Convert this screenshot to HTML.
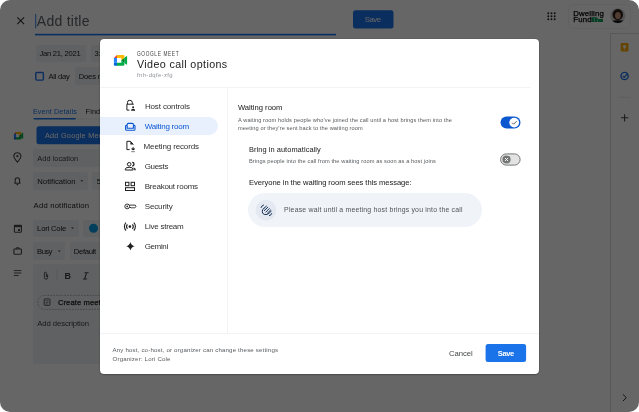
<!DOCTYPE html>
<html><head><meta charset="utf-8">
<style>
*{box-sizing:border-box;margin:0;padding:0}
html,body{width:639px;height:412px;background:#fff;overflow:hidden}
body{font-family:"Liberation Sans",sans-serif;position:relative}
.a{position:absolute}
.t{position:absolute;white-space:nowrap;line-height:1}
#page{position:absolute;left:0;top:0;width:639px;height:412px;border-radius:10px;overflow:hidden;background:#fff;will-change:transform}
#scrim{position:absolute;left:0;top:0;width:639px;height:412px;background:rgba(0,0,0,0.6)}
.chip{position:absolute;background:#f1f3f4;border-radius:2px}
#dlg{position:absolute;left:100px;top:39px;width:439px;height:335px;background:#fff;border-radius:4px;box-shadow:0 0 1px rgba(0,0,0,0.6),0 1px 2px rgba(0,0,0,0.25)}

.s1{-webkit-text-stroke:0.25px currentColor}
.s2{-webkit-text-stroke:0.03px currentColor}

</style></head><body>
<div id="page">
  <!-- ===== background page ===== -->
  <svg class="a" style="left:0;top:0" width="639" height="412" viewBox="0 0 639 412">
    <!-- close X -->
    <path d="M17.3 17.3L24.1 24.1M24.1 17.3L17.3 24.1" stroke="#303134" stroke-width="1.1" fill="none"/>
    <!-- title underline + cursor -->
    <rect x="35" y="33.8" width="301" height="1.6" fill="#1a73e8"/>
    <rect x="35.3" y="14" width="0.9" height="14.3" fill="#1a73e8"/>
    <!-- top save -->
    <rect x="353" y="10.2" width="40.5" height="18.3" rx="2.5" fill="#1a73e8"/>
    <!-- apps grid -->
    <g fill="#1f1f1f">
      <circle cx="548.3" cy="13.3" r="0.95"/><circle cx="551.5" cy="13.3" r="0.95"/><circle cx="554.7" cy="13.3" r="0.95"/>
      <circle cx="548.3" cy="16.3" r="0.95"/><circle cx="551.5" cy="16.3" r="0.95"/><circle cx="554.7" cy="16.3" r="0.95"/>
      <circle cx="548.3" cy="19.3" r="0.95"/><circle cx="551.5" cy="19.3" r="0.95"/><circle cx="554.7" cy="19.3" r="0.95"/>
    </g>
    <!-- logo box -->
    <rect x="568.5" y="4.5" width="62" height="24" rx="4.5" fill="none" stroke="#f1f3f4" stroke-width="1"/>
    <path d="M591.5 17.2H596.5L598.5 19H603V21.9H591.5Z" fill="#0f9d58"/>
    <path d="M594.5 17.8V21.9M597.5 19.6V21.9" stroke="#fff" stroke-width="0.5"/>
    <!-- avatar -->
    <defs><clipPath id="avc"><circle cx="617.8" cy="15.8" r="7.3"/></clipPath></defs>
    <circle cx="617.8" cy="15.8" r="7.8" fill="#e8e8e8"/>
    <g clip-path="url(#avc)">
      <rect x="610" y="8" width="16" height="16" fill="#cfcfcf"/>
      <ellipse cx="617.8" cy="14.6" rx="5.2" ry="5.6" fill="#2a1c16"/>
      <ellipse cx="617.9" cy="15.6" rx="2.9" ry="3.7" fill="#c8967c"/>
      <path d="M610 21.3Q617.8 19.4 626 21.3V24H610Z" fill="#0a0a0a"/>
    </g>
    <!-- sidebar -->
    <path d="M610.5 412V33.5H639" stroke="#dadce0" stroke-width="1" fill="none"/>
    <rect x="620.7" y="43" width="7.8" height="8.4" rx="1" fill="#f9ab00"/>
    <circle cx="624.5" cy="46.5" r="1.6" fill="#fff"/><rect x="623.8" y="48.3" width="1.4" height="1.3" fill="#fff"/>
    <circle cx="624.6" cy="76" r="3.6" fill="none" stroke="#1a73e8" stroke-width="1.4"/>
    <path d="M622.8 75.8L624.3 77.3L627.6 73.4" stroke="#1a73e8" stroke-width="1.2" fill="none"/>
    <rect x="619" y="96.7" width="11.7" height="1" fill="#e8eaed"/>
    <path d="M624.6 114.2V121.4M621 117.8H628.3" stroke="#444746" stroke-width="1.1"/>
    <path d="M622.9 394.3L626.3 397.7L622.9 401.1" stroke="#303134" stroke-width="1" fill="none"/>
  </svg>

  <!-- chips -->
  <div class="chip" style="left:35.5px;top:44.9px;width:50.3px;height:17.4px"></div>
  <div class="chip" style="left:90.7px;top:44.9px;width:45px;height:17.4px"></div>
  <div class="chip" style="left:75.1px;top:67.3px;width:60px;height:17.5px"></div>
  <div class="chip" style="left:33.1px;top:149.2px;width:100px;height:17.5px"></div>
  <div class="chip" style="left:33.1px;top:172.2px;width:54.7px;height:17.8px"></div>
  <div class="chip" style="left:92.1px;top:172.2px;width:40px;height:17.8px"></div>
  <div class="chip" style="left:33.3px;top:219.6px;width:45.5px;height:17.5px"></div>
  <div class="chip" style="left:82.9px;top:219.6px;width:40px;height:17.5px"></div>
  <div class="chip" style="left:33.3px;top:242.3px;width:31.6px;height:17.5px"></div>
  <div class="chip" style="left:70px;top:242.3px;width:50px;height:17.5px"></div>
  <div class="chip" style="left:33.2px;top:263.5px;width:100px;height:100.4px"></div>

  <svg class="a" style="left:0;top:0" width="639" height="412" viewBox="0 0 639 412">
    <!-- checkbox -->
    <rect x="35.8" y="72.5" width="7.6" height="7.6" rx="1" fill="none" stroke="#1a73e8" stroke-width="1.4"/>
    <!-- tabs -->
    <rect x="76" y="118.6" width="60" height="0.8" fill="#e8eaed"/>
    <rect x="33.5" y="118" width="42.4" height="1.6" rx="0.8" fill="#1a73e8"/>
    <!-- add meet button -->
    <rect x="36.5" y="126.2" width="100" height="18.1" rx="2.5" fill="#1a73e8"/>
    <!-- small meet logo -->
    <g transform="translate(13.9 131.9) scale(0.1063)">
      <path fill="#00832d" d="M49.5 36l8.53 9.75 11.47 7.33 2-17.02-2-16.46-11.69 6.44z"/><path fill="#0066da" d="M0 51.5V66c0 3.315 2.685 6 6 6h14.5l3-10.96-3-9.54-9.95-3z"/><path fill="#e94235" d="M20.5 0L0 20.5l10.55 3 9.95-3 2.95-9.41z"/><path fill="#2684fc" d="M20.5 20.5H0v31h20.5z"/><path fill="#00ac47" d="M82.6 8.68L69.5 19.42v33.66l13.16 10.79c1.97 1.54 4.85.135 4.85-2.37V11c0-2.535-2.945-3.925-4.91-2.32zM49.5 36v15.5h-29V72h43c3.315 0 6-2.685 6-6V53.08z"/><path fill="#ffba00" d="M63.5 0h-43v20.5h29V36l20-16.57V6c0-3.315-2.685-6-6-6z"/>
    </g>
    <!-- location pin -->
    <path d="M17.4 162.2C15.2 159.6 13.9 157.7 13.9 156.2A3.5 3.5 0 0 1 20.9 156.2C20.9 157.7 19.6 159.6 17.4 162.2Z" fill="none" stroke="#444746" stroke-width="1.1"/>
    <circle cx="17.4" cy="156.2" r="1.1" fill="#444746"/>
    <!-- bell -->
    <path d="M14.3 183.2H20.5M15.2 183.2V180A2.2 2.2 0 0 1 19.6 180V183.2M16.6 184.6H18.2" stroke="#444746" stroke-width="1.1" fill="none"/>
    <!-- calendar -->
    <rect x="14.4" y="225.4" width="7" height="6.8" rx="0.6" fill="none" stroke="#444746" stroke-width="1.1"/>
    <rect x="14.4" y="225.4" width="7" height="1.8" fill="#444746"/>
    <rect x="18" y="229" width="2" height="2" fill="#444746"/>
    <!-- briefcase -->
    <rect x="13.9" y="249" width="7.5" height="5.2" rx="0.6" fill="none" stroke="#444746" stroke-width="1.1"/>
    <path d="M16.2 249V247.8H19.1V249" stroke="#444746" stroke-width="1" fill="none"/>
    <!-- notes lines -->
    <path d="M13.9 270.6H21.4M13.9 273H21.4M13.9 275.5H18.6" stroke="#444746" stroke-width="0.9"/>
    <!-- dropdown triangles -->
    <path d="M80.4 180.3H83.4L81.9 181.8Z" fill="#444746"/>
    <path d="M71 227.6H74L72.5 229.1Z" fill="#444746"/>
    <path d="M57.8 250.5H60.8L59.3 252Z" fill="#444746"/>
    <!-- color dot -->
    <circle cx="93.5" cy="228.2" r="4.5" fill="#039be5"/>
    <!-- toolbar -->
    <path d="M47.6 274.5V277.6A1.6 1.6 0 0 1 44.4 277.6V273.2A1 1 0 0 1 46.4 273.2V277" stroke="#444746" stroke-width="0.9" fill="none"/>
    <rect x="56.5" y="269.8" width="0.8" height="11.3" fill="#dadce0"/>
    <path d="M84.5 272.7H88.6M83 279H87.1M86.6 272.7L84.6 279" stroke="#444746" stroke-width="1.1" fill="none"/>
    <!-- create meeting notes pill -->
    <rect x="37.8" y="295.4" width="100" height="14" rx="7" fill="none" stroke="#9aa0a6" stroke-width="0.8" stroke-dasharray="1.6 1.2"/>
    <rect x="44.2" y="298.9" width="5.8" height="6.4" rx="0.6" fill="none" stroke="#444746" stroke-width="0.9"/>
    <path d="M45.6 300.8H48.6M45.6 302.3H48.6M45.6 303.8H47.6" stroke="#444746" stroke-width="0.6"/>
  </svg>
<div class="t " style="left:36.80px;top:14.01px;font-size:14.00px;letter-spacing:0.263px;color:#5f6368;font-weight:400;font-style:normal">Add title</div>
<div class="t " style="left:39.50px;top:50.01px;font-size:7.60px;letter-spacing:-0.254px;color:#202124;font-weight:400;font-style:normal">Jan 21, 2021</div>
<div class="t " style="left:94.50px;top:50.01px;font-size:7.60px;letter-spacing:-0.300px;color:#202124;font-weight:400;font-style:normal">3:30pm</div>
<div class="t " style="left:48.40px;top:73.00px;font-size:7.60px;letter-spacing:-0.233px;color:#202124;font-weight:400;font-style:normal">All day</div>
<div class="t " style="left:78.80px;top:73.00px;font-size:7.60px;letter-spacing:-0.200px;color:#202124;font-weight:400;font-style:normal">Does not repeat</div>
<div class="t " style="left:32.90px;top:108.01px;font-size:7.20px;letter-spacing:0.129px;color:#1a73e8;font-weight:400;font-style:normal">Event Details</div>
<div class="t " style="left:85.60px;top:108.01px;font-size:7.20px;letter-spacing:0.170px;color:#202124;font-weight:400;font-style:normal">Find a time</div>
<div class="t s2" style="left:44.90px;top:132.01px;font-size:7.30px;letter-spacing:0.250px;color:#ffffff;font-weight:400;font-style:normal">Add Google Meet</div>
<div class="t " style="left:37.30px;top:155.01px;font-size:7.40px;letter-spacing:0.021px;color:#3c4043;font-weight:400;font-style:normal">Add location</div>
<div class="t " style="left:37.30px;top:178.01px;font-size:7.70px;letter-spacing:0.013px;color:#202124;font-weight:400;font-style:normal">Notification</div>
<div class="t " style="left:96.80px;top:178.01px;font-size:7.70px;letter-spacing:0.000px;color:#202124;font-weight:400;font-style:normal">5</div>
<div class="t " style="left:33.60px;top:202.01px;font-size:7.70px;letter-spacing:0.194px;color:#202124;font-weight:400;font-style:normal">Add notification</div>
<div class="t " style="left:37.10px;top:225.00px;font-size:7.70px;letter-spacing:-0.211px;color:#202124;font-weight:400;font-style:normal">Lori Cole</div>
<div class="t " style="left:37.10px;top:248.01px;font-size:7.70px;letter-spacing:-0.582px;color:#202124;font-weight:400;font-style:normal">Busy</div>
<div class="t " style="left:73.80px;top:248.01px;font-size:7.70px;letter-spacing:-0.320px;color:#202124;font-weight:400;font-style:normal">Default</div>
<div class="t " style="left:64.40px;top:272.00px;font-size:9.00px;letter-spacing:0.000px;color:#3c4043;font-weight:700;font-style:normal">B</div>
<div class="t s1" style="left:57.90px;top:299.01px;font-size:7.60px;letter-spacing:0.100px;color:#1f1f1f;font-weight:400;font-style:normal">Create meeting notes</div>
<div class="t " style="left:37.30px;top:320.00px;font-size:7.70px;letter-spacing:-0.087px;color:#3c4043;font-weight:400;font-style:normal">Add description</div>
<div class="t " style="left:364.70px;top:16.01px;font-size:7.70px;letter-spacing:-0.416px;color:#ffffff;font-weight:500;font-style:normal">Save</div>
<div class="t s1" style="left:573.30px;top:10.01px;font-size:7.80px;letter-spacing:0.153px;color:#000000;font-weight:400;font-style:normal">Dwelling</div>
<div class="t s1" style="left:573.30px;top:16.01px;font-size:7.80px;letter-spacing:0.153px;color:#000000;font-weight:400;font-style:normal">Fund</div>

  <div id="scrim"></div>

  <!-- ===== dialog ===== -->
  <div id="dlg"></div>
  <svg class="a" style="left:0;top:0" width="639" height="412" viewBox="0 0 639 412">
    <!-- dividers -->
    <rect x="101" y="87" width="429.5" height="1" fill="#f1f3f4"/>
    <rect x="227" y="88" width="1" height="245" fill="#f1f3f4"/>
    <rect x="100" y="333" width="439" height="1" fill="#f1f3f4"/>
    <!-- meet logo -->
    <g transform="translate(113.9 54.9) scale(0.1509)">
      <path fill="#00832d" d="M49.5 36l8.53 9.75 11.47 7.33 2-17.02-2-16.46-11.69 6.44z"/><path fill="#0066da" d="M0 51.5V66c0 3.315 2.685 6 6 6h14.5l3-10.96-3-9.54-9.95-3z"/><path fill="#e94235" d="M20.5 0L0 20.5l10.55 3 9.950-3 2.95-9.41z"/><path fill="#2684fc" d="M20.5 20.5H0v31h20.5z"/><path fill="#00ac47" d="M82.6 8.68L69.5 19.42v33.66l13.16 10.79c1.970 1.54 4.85.135 4.85-2.37V11c0-2.535-2.945-3.925-4.91-2.32zM49.5 36v15.5h-29V72h43c3.315 0 6-2.685 6-6V53.08z"/><path fill="#ffba00" d="M63.5 0h-43v20.5h29V36l20-16.57V6c0-3.315-2.685-6-6-6z"/>
    </g>
    <!-- active nav pill -->
    <path d="M100 117H209A9 9 0 0 1 209 135H100Z" fill="#e8f0fe"/>
    <g transform="translate(100 39)">
      <g fill="none" stroke="#1f1f1f" stroke-width="1">
        <path d="M27.4 65.2V63.7a2.45 2.45 0 0 1 4.9 0V65.2"/>
        <path d="M29.4 71.1H26.9V65.2H33.8"/>
        <path d="M29.6 110.6H26.9V102.3H30.4L33.4 105.5"/>
        <circle cx="29.2" cy="125.3" r="1.8"/>
        <path d="M25.3 131V130.2Q25.3 128.3 29.2 128.3Q33.1 128.3 33.1 130.2V131Z"/>
        <path d="M32.2 123.4A1.8 1.8 0 0 1 32.2 127" stroke-width="1.3"/>
        
        <rect x="25.5" y="143.3" width="3.4" height="3.4"/>
        <rect x="31.1" y="143.3" width="3.4" height="3.4"/>
        <rect x="25.5" y="148.7" width="9" height="2.8"/>
        <path d="M27.4 185.4A3.4 3.4 0 0 0 27.4 189.8" stroke-width="1.1"/>
        <path d="M32.4 185.4A3.4 3.4 0 0 1 32.4 189.8" stroke-width="1.1"/>
        <path d="M26 183.7A5.6 5.6 0 0 0 26 191.5" stroke-width="1.1"/>
        <path d="M33.8 183.7A5.6 5.6 0 0 1 33.8 191.5" stroke-width="1.1"/>
      </g>
      <g fill="none" stroke="#1f1f1f" stroke-width="0.9">
        <circle cx="27.2" cy="167.4" r="2.4"/>
        <path d="M29.5 166.1H35.2L36 167.3L35.2 168.5H34.7L34 169.3L33.3 168.5H32.7L32 169.3L31.3 168.5H29.5"/>
      </g>
      <g fill="#1f1f1f">
        <circle cx="33.1" cy="68.3" r="1"/>
        <path d="M31 71.7Q31 69.8 33.1 69.8Q35.2 69.8 35.2 71.7Z"/><path d="M33.7 128.4Q35.9 129.1 35.9 131.3H34.4Q34.4 129.9 33.3 129.3Z"/>
        <path d="M30.4 102.3L33.4 105.5H30.4Z"/>
        <circle cx="33.15" cy="108.5" r="0.8" fill="#777"/><path d="M31.4 109.3H34.9Q34.9 111.2 33.15 111.2Q31.4 111.2 31.4 109.3Z"/>
        <rect x="31.2" y="112.1" width="3.7" height="1.1" fill="#8a8a8a"/>
        <circle cx="27.2" cy="167.4" r="0.85"/>
        <circle cx="29.9" cy="187.6" r="1.3"/>
        <path d="M30.4 203.1Q31.1 206.6 34.7 207.35Q31.1 208.1 30.4 211.6Q29.7 208.1 26.1 207.35Q29.7 206.6 30.4 203.1Z"/>
      </g>
      <g fill="none" stroke="#0b57d0" stroke-width="1.1">
        <path d="M25.6 87.2Q25.6 86.3 26.4 86.3Q27.2 86.3 27.2 87.2V89.3H33.4V87.2Q33.4 86.3 34.2 86.3Q35 86.3 35 87.2V90.2Q35 91.3 33.9 91.3H26.7Q25.6 91.3 25.6 90.2Z"/>
        <path d="M27.2 86.3V85.5Q27.2 84.4 28.3 84.4H32.3Q33.4 84.4 33.4 85.5V86.3"/>
      </g>
    </g>
    <!-- toggles -->
    <rect x="500.5" y="116.5" width="20" height="12" rx="6" fill="#0b57d0"/>
    <circle cx="514.2" cy="122.6" r="4.9" fill="#fff"/>
    <path d="M512.1 122.7L513.6 124.2L516.6 121.2" fill="none" stroke="#444746" stroke-width="0.9"/>
    <rect x="500.6" y="153.9" width="19.5" height="11.2" rx="5.6" fill="#e3e3e3" stroke="#747775" stroke-width="1"/>
    <circle cx="506.5" cy="159.5" r="4.1" fill="#747775"/>
    <path d="M505 158L508 161M508 158L505 161" fill="none" stroke="#fff" stroke-width="0.9"/>
    <!-- message pill -->
    <rect x="248" y="193" width="234" height="34" rx="17" fill="#f0f4f9"/>
    <circle cx="266" cy="210.2" r="10.4" fill="#e3e8f1"/>
    <g fill="none" stroke="#041e49" stroke-width="0.9" stroke-linecap="round" stroke-linejoin="round">
      <path d="M261.1 207.5Q261.5 205.6 263.5 205"/>
      <path d="M269.4 215.7Q271.3 215.3 271.7 213.6"/>
      <path d="M264 208.2Q262 209.6 262.2 211.9Q262.6 214.1 264.8 214.6Q267.6 215 269.8 212.7L271.1 211.1"/>
      <path d="M264 208.2L266.4 206.2"/>
      <path d="M264.3 210.6L267.8 207.2"/>
      <path d="M265.8 212.1L269.2 208.6"/>
      <path d="M267.4 213.2L270.6 210"/>
    </g>
    <!-- save button -->
    <rect x="485.6" y="344" width="40.5" height="17.9" rx="2.5" fill="#1a73e8"/>
  </svg>
<div class="t s2" style="left:137.10px;top:51.00px;font-size:6.40px;letter-spacing:0.889px;color:#444746;font-weight:400;font-style:normal;transform:scaleX(0.74);transform-origin:0 0">GOOGLE MEET</div>
<div class="t s2" style="left:137.00px;top:59.01px;font-size:10.70px;letter-spacing:0.386px;color:#1f1f1f;font-weight:400;font-style:normal">Video call options</div>
<div class="t " style="left:137.00px;top:73.00px;font-size:5.90px;letter-spacing:0.376px;color:#8d9196;font-weight:400;font-style:normal">fnh-dqfe-zfg</div>
<div class="t " style="left:144.90px;top:103.00px;font-size:8.00px;letter-spacing:-0.132px;color:#303030;font-weight:400;font-style:normal">Host controls</div>
<div class="t " style="left:144.80px;top:123.01px;font-size:8.00px;letter-spacing:-0.224px;color:#0b57d0;font-weight:400;font-style:normal">Waiting room</div>
<div class="t " style="left:143.60px;top:143.00px;font-size:8.00px;letter-spacing:-0.140px;color:#303030;font-weight:400;font-style:normal">Meeting records</div>
<div class="t " style="left:144.70px;top:163.00px;font-size:8.00px;letter-spacing:-0.329px;color:#303030;font-weight:400;font-style:normal">Guests</div>
<div class="t " style="left:144.70px;top:183.00px;font-size:8.00px;letter-spacing:-0.236px;color:#303030;font-weight:400;font-style:normal">Breakout rooms</div>
<div class="t " style="left:144.70px;top:203.00px;font-size:8.00px;letter-spacing:-0.128px;color:#303030;font-weight:400;font-style:normal">Security</div>
<div class="t " style="left:144.70px;top:223.00px;font-size:8.00px;letter-spacing:-0.228px;color:#303030;font-weight:400;font-style:normal">Live stream</div>
<div class="t " style="left:144.70px;top:243.00px;font-size:8.00px;letter-spacing:-0.372px;color:#303030;font-weight:400;font-style:normal">Gemini</div>
<div class="t s2" style="left:237.90px;top:104.01px;font-size:7.60px;letter-spacing:0.007px;color:#1f1f1f;font-weight:400;font-style:normal">Waiting room</div>
<div class="t " style="left:238.00px;top:118.00px;font-size:5.65px;letter-spacing:0.098px;color:#575b5f;font-weight:400;font-style:normal">A waiting room holds people who’ve joined the call until a host brings them into the</div>
<div class="t " style="left:238.00px;top:126.01px;font-size:5.65px;letter-spacing:0.098px;color:#575b5f;font-weight:400;font-style:normal">meeting or they’re sent back to the waiting room</div>
<div class="t s2" style="left:249.00px;top:146.01px;font-size:7.40px;letter-spacing:0.069px;color:#1f1f1f;font-weight:400;font-style:normal">Bring in automatically</div>
<div class="t " style="left:249.00px;top:159.00px;font-size:5.65px;letter-spacing:0.104px;color:#575b5f;font-weight:400;font-style:normal">Brings people into the call from the waiting room as soon as a host joins</div>
<div class="t s2" style="left:249.10px;top:179.01px;font-size:7.60px;letter-spacing:-0.057px;color:#1f1f1f;font-weight:400;font-style:normal">Everyone in the waiting room sees this message:</div>
<div class="t " style="left:284.10px;top:207.01px;font-size:6.90px;letter-spacing:0.197px;color:#505458;font-weight:400;font-style:normal">Please wait until a meeting host brings you into the call</div>
<div class="t " style="left:112.50px;top:347.01px;font-size:6.10px;letter-spacing:0.180px;color:#575b5f;font-weight:400;font-style:normal">Any host, co-host, or organizer can change these settings</div>
<div class="t " style="left:112.50px;top:356.00px;font-size:6.10px;letter-spacing:0.180px;color:#575b5f;font-weight:400;font-style:normal">Organizer: Lori Cole</div>
<div class="t " style="left:449.00px;top:350.01px;font-size:7.70px;letter-spacing:-0.064px;color:#444746;font-weight:400;font-style:normal">Cancel</div>
<div class="t " style="left:497.80px;top:350.01px;font-size:7.60px;letter-spacing:-0.471px;color:#ffffff;font-weight:700;font-style:normal">Save</div>
</div>
</body></html>
